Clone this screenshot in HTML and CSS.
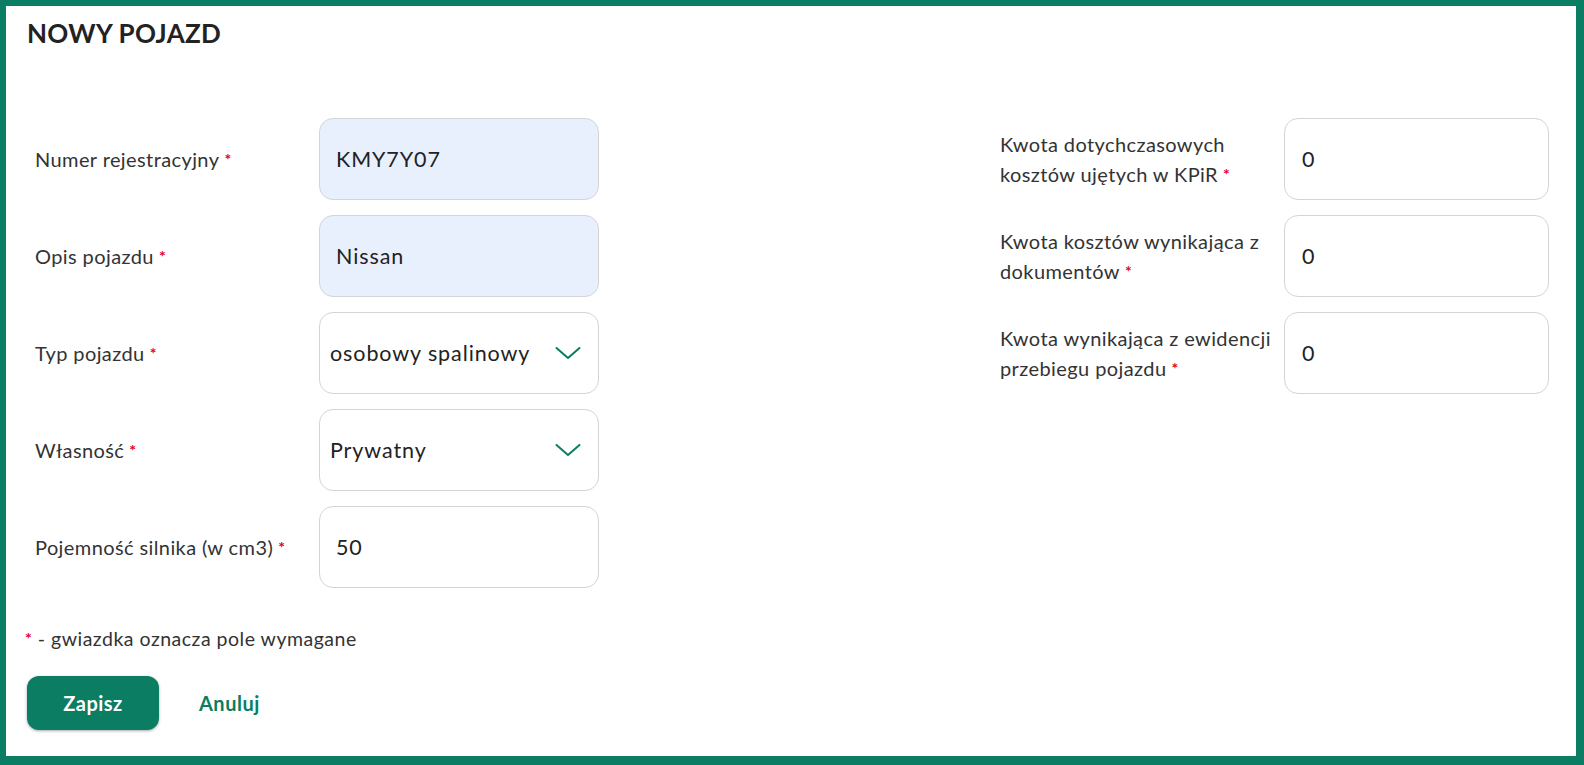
FILE: index.html
```html
<!DOCTYPE html>
<html lang="pl">
<head>
<meta charset="utf-8">
<title>Nowy pojazd</title>
<link rel="stylesheet" href="styles.css">
</head>
<body>
<div class="frame">
  <h1 class="title">NOWY POJAZD</h1>
  <div class="cols">
    <div class="col col-left">
      <div class="row">
        <label class="label">Numer rejestracyjny<span class="req">*</span></label>
        <div class="field field-auto"><span class="value">KMY7Y07</span></div>
      </div>
      <div class="row">
        <label class="label">Opis pojazdu<span class="req">*</span></label>
        <div class="field field-auto"><span class="value">Nissan</span></div>
      </div>
      <div class="row">
        <label class="label">Typ pojazdu<span class="req">*</span></label>
        <div class="field field-select"><span class="value">osobowy spalinowy</span>
          <svg class="chev" viewBox="0 0 26 14" width="26" height="14"><path d="M1.5 2 L13 12 L24.5 2" fill="none" stroke="#0a7d62" stroke-width="2" stroke-linecap="round" stroke-linejoin="round"/></svg>
        </div>
      </div>
      <div class="row">
        <label class="label">Własność<span class="req">*</span></label>
        <div class="field field-select"><span class="value">Prywatny</span>
          <svg class="chev" viewBox="0 0 26 14" width="26" height="14"><path d="M1.5 2 L13 12 L24.5 2" fill="none" stroke="#0a7d62" stroke-width="2" stroke-linecap="round" stroke-linejoin="round"/></svg>
        </div>
      </div>
      <div class="row">
        <label class="label">Pojemność silnika (w cm3)<span class="req">*</span></label>
        <div class="field"><span class="value">50</span></div>
      </div>
    </div>
    <div class="col col-right">
      <div class="row">
        <label class="label label-r"><span class="line">Kwota dotychczasowych</span> <span class="line">kosztów ujętych w KPiR<span class="req">*</span></span></label>
        <div class="field field-r"><span class="value">0</span></div>
      </div>
      <div class="row">
        <label class="label label-r"><span class="line">Kwota kosztów wynikająca z</span> <span class="line">dokumentów<span class="req">*</span></span></label>
        <div class="field field-r"><span class="value">0</span></div>
      </div>
      <div class="row">
        <label class="label label-r"><span class="line">Kwota wynikająca z ewidencji</span> <span class="line">przebiegu pojazdu<span class="req">*</span></span></label>
        <div class="field field-r"><span class="value">0</span></div>
      </div>
    </div>
  </div>
  <p class="note"><span class="req req-note">*</span> - gwiazdka oznacza pole wymagane</p>
  <div class="actions">
    <button class="btn-save" type="button">Zapisz</button>
    <a class="btn-cancel" href="#">Anuluj</a>
  </div>
</div>
</body>
</html>
```
FILE: styles.css
```css
html, body {
  margin: 0;
  padding: 0;
  background: #ffffff;
}
body {
  font-family: Lato, "Open Sans", sans-serif;
  color: #333333;
}
.frame {
  box-sizing: border-box;
  width: 1584px;
  height: 765px;
  border-style: solid;
  border-color: #0a7d62;
  border-width: 6px 8px 9px 6px;
  padding: 11px 27px 0 21px;
}
.title {
  margin: 0;
  font-size: 26px;
  font-weight: 700;
  letter-spacing: 0.3px;
  color: #222222;
  line-height: 32px;
}
.cols {
  display: flex;
  justify-content: space-between;
  margin-top: 69px;
}
.col {
  display: flex;
  flex-direction: column;
  gap: 15px;
}
.col-left {
  margin-left: 8px;
}
.row {
  display: flex;
  align-items: center;
  height: 82px;
}
.label {
  font-size: 20px;
  letter-spacing: 0.4px;
  line-height: 30px;
  color: #333333;
}
.col-left .label {
  width: 284px;
}
.label-r {
  width: 278px;
  margin-right: 6px;
}
.line {
  white-space: nowrap;
}
.req {
  color: #e3001b;
  font-size: 16px;
  font-weight: 700;
  line-height: 1;
  margin-left: 5px;
  vertical-align: 2px;
}
.req-note {
  margin-left: 0;
}
.field {
  box-sizing: border-box;
  width: 280px;
  height: 82px;
  border: 1.5px solid #d4d4d4;
  border-radius: 14px;
  background: #ffffff;
  display: flex;
  align-items: center;
  padding: 0 16px;
  font-size: 21.5px;
  letter-spacing: 0.9px;
  color: #222222;
}
.field-auto {
  background: #e8f0fe;
}
.field-select {
  padding: 0 17px 0 10px;
  justify-content: space-between;
}
.field-r {
  width: 265px;
  padding-left: 17px;
}
.chev {
  display: block;
}
.note {
  margin: 40px 0 0 -2px;
  font-size: 19.5px;
  letter-spacing: 0.5px;
  line-height: 22px;
  color: #333333;
}
.actions {
  display: flex;
  align-items: center;
  gap: 40px;
  margin-top: 26px;
}
.btn-save {
  width: 132px;
  height: 54px;
  border: none;
  border-radius: 12px;
  background: #0a7d62;
  color: #ffffff;
  font-family: Lato, sans-serif;
  font-size: 20px;
  letter-spacing: 0.5px;
  font-weight: 700;
  box-shadow: 0 1px 3px rgba(0, 0, 0, 0.35);
}
.btn-cancel {
  color: #0a7d62;
  font-size: 20px;
  letter-spacing: 0.5px;
  font-weight: 700;
  text-decoration: none;
}
```
